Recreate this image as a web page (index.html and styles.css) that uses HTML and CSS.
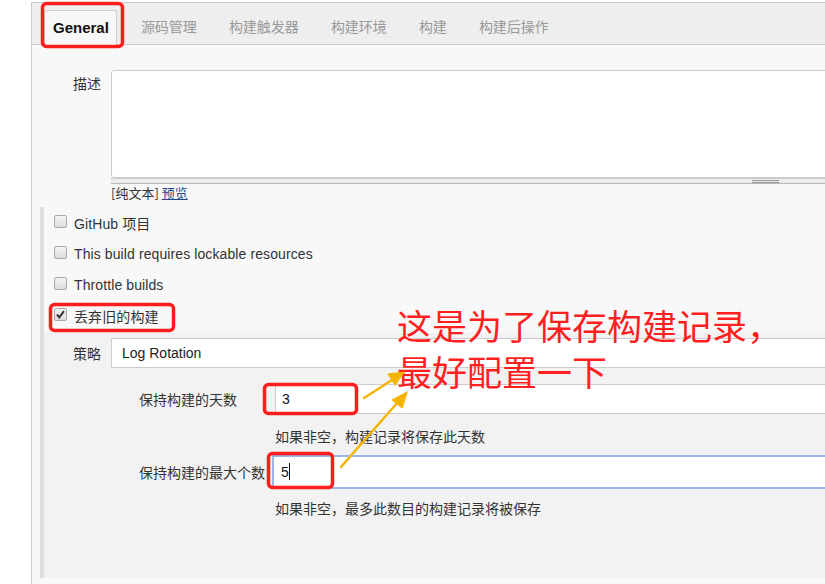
FILE: index.html
```html
<!DOCTYPE html>
<html lang="zh-CN">
<head>
<meta charset="utf-8">
<title>配置</title>
<link rel="stylesheet" href="styles.css">
</head>
<body>
<div class="frame">
  <div class="tabs">
    <div class="tab active">General</div>
    <div class="tab first">源码管理</div>
    <div class="tab">构建触发器</div>
    <div class="tab">构建环境</div>
    <div class="tab">构建</div>
    <div class="tab">构建后操作</div>
  </div>

  <div class="row desc-row">
    <div class="label">描述</div>
    <div class="field">
      <div class="textarea"></div>
      <div class="grip"><span class="grip-lines"></span></div>
      <div class="fmt">[纯文本] <a class="preview">预览</a></div>
    </div>
  </div>

  <div class="opts">
    <div class="opt"><span class="cb"></span><span class="opt-text">GitHub 项目</span></div>
    <div class="opt"><span class="cb"></span><span class="opt-text">This build requires lockable resources</span></div>
    <div class="opt"><span class="cb"></span><span class="opt-text">Throttle builds</span></div>
    <div class="opt"><span class="cb checked"><svg viewBox="0 0 13 13" width="13" height="13"><path d="M3 6.5 L5.3 9.3 L10 3.2" fill="none" stroke="#333" stroke-width="2"/></svg></span><span class="opt-text">丢弃旧的构建</span></div>

    <div class="nested">
      <div class="row strat-row">
        <div class="label">策略</div>
        <div class="field"><div class="select">Log Rotation</div></div>
      </div>
      <div class="sub">
        <div class="sub-label">保持构建的天数</div>
        <div class="sub-field"><div class="input">3</div></div>
        <div class="sub-help">如果非空，构建记录将保存此天数</div>
        <div class="sub-label">保持构建的最大个数</div>
        <div class="sub-field"><div class="input focus">5<span class="caret"></span></div></div>
        <div class="sub-help last">如果非空，最多此数目的构建记录将被保存</div>
      </div>
    </div>
  </div>
</div>

<div class="note">这是为了保存构建记录，<br>最好配置一下</div>
<svg class="marks" width="825" height="584" viewBox="0 0 825 584">
  <g fill="none" stroke="#ff1c1c" stroke-width="3.5">
    <rect x="42.5" y="3.5" width="80" height="43" rx="4"/>
    <rect x="50.5" y="304.5" width="123" height="26" rx="4"/>
    <rect x="264.5" y="384.5" width="92" height="29" rx="4"/>
    <rect x="268.5" y="453.5" width="64" height="34" rx="4"/>
  </g>
  <g stroke="#f5b400" stroke-width="2.5" fill="#f5b400" stroke-linecap="round">
    <line x1="364" y1="398" x2="392" y2="380"/>
    <polygon points="404,372 388,374 395,385" stroke-width="1"/>
    <line x1="341" y1="467" x2="398" y2="402"/>
    <polygon points="407,392 392,400 402,408" stroke-width="1"/>
  </g>
</svg>
</body>
</html>
```

FILE: styles.css
```css
html, body {
  margin: 0;
  padding: 0;
  background: #fff;
  overflow: hidden;
  width: 825px;
  height: 584px;
}
body {
  position: relative;
  font-family: "Liberation Sans", "Noto Sans CJK SC", sans-serif;
  font-size: 14px;
  color: #333;
}
.frame {
  margin: 2px 0 0 31px;
  border-left: 1px solid #ccc;
  border-top: 1px solid #ccc;
  background: #f8f8f8;
  height: 600px;
}
.tabs {
  display: flex;
  align-items: flex-end;
  height: 41px;
  background: #eee;
  border-bottom: 1px solid #ccc;
  padding-left: 12px;
}
.tab {
  height: 34px;
  line-height: 33px;
  padding: 0 16px;
  color: #999;
  font-family: "Noto Sans CJK SC", sans-serif;
  font-size: 14px;
  box-sizing: border-box;
}
.tab.first { margin-left: 8px; }
.tab.active {
  padding: 0 7px 0 8px;
  font-family: "Liberation Sans", sans-serif;
  font-weight: bold;
  font-size: 15px;
  color: #111;
  background: #f8f8f8;
  border: 1px solid #ccc;
  border-bottom: none;
  border-radius: 3px 3px 0 0;
  height: 35px;
  margin-bottom: -1px;
  line-height: 33px;
}
.row {
  display: grid;
  grid-template-columns: 69px 1fr;
  column-gap: 10px;
}
.label {
  text-align: right;
  font-family: "Noto Sans CJK SC", sans-serif;
  color: #333;
}
.desc-row { margin-top: 25px; }
.desc-row .label { padding-top: 4px; line-height: 18px; }
.field { margin-right: -6px; }
.textarea {
  height: 106px;
  background: #fff;
  border: 1px solid #ccc;
  border-radius: 3px;
}
.grip {
  height: 4px;
  background: #ececec;
  border-top: 1px solid #ccc;
  border-bottom: 1px solid #b8b8b8;
  position: relative;
}
.grip-lines {
  position: absolute;
  left: 641px;
  top: 1px;
  width: 27px;
  height: 1px;
  border-top: 1px solid #999;
  border-bottom: 1px solid #999;
}
.fmt {
  font-family: "Noto Sans CJK SC", sans-serif;
  font-size: 13px;
  line-height: 18px;
  margin-top: 0;
  color: #333;
}
.preview { color: #204a87; text-decoration: underline; }
.opts {
  margin-left: 8px;
  margin-top: 5px;
  border-left: 4px solid #dedede;
  padding-top: 0;
}
.opt {
  display: flex;
  align-items: center;
  height: 31px;
  padding-left: 10px;
}
.cb {
  width: 11px;
  height: 11px;
  border: 1px solid #a9a9a9;
  border-radius: 2px;
  background: linear-gradient(#f4f4f4, #dcdcdc);
  margin-right: 7px;
  position: relative;
  top: -1px;
}
.cb svg { position: absolute; left: -1px; top: -1px; }
.opt-text {
  font-family: "Liberation Sans", "Noto Sans CJK SC", sans-serif;
  letter-spacing: 0.1px;
  color: #333;
}
.nested {
  background: #f2f2f2;
  margin-top: 2px;
  height: 245px;
  padding-top: 5px;
  box-sizing: border-box;
}
.nested .row { grid-template-columns: 57px 1fr; }
.strat-row .label { line-height: 30px; }
.select {
  height: 28px;
  line-height: 28px;
  background: #fff;
  border: 1px solid #ccc;
  padding-left: 10px;
  font-family: "Liberation Sans", sans-serif;
  color: #222;
}
.sub {
  display: grid;
  grid-template-columns: 231px 1fr;
  margin-top: 16px;
  align-items: center;
}
.sub-label {
  padding-left: 95px;
  font-family: "Noto Sans CJK SC", sans-serif;
  white-space: nowrap;
}
.sub-field { margin-right: -6px; }
.input {
  height: 28px;
  line-height: 28px;
  background: #fff;
  border: 1px solid #ccc;
  padding-left: 6px;
  font-family: "Liberation Sans", sans-serif;
  color: #111;
}
.input.focus {
  border: 2px solid #9ab7ea;
  margin-left: -3px;
  height: 30px;
  line-height: 30px;
  padding-left: 7px;
}
.caret {
  display: inline-block;
  width: 1px;
  height: 17px;
  background: #111;
  vertical-align: -3px;
}
.sub-help {
  grid-column: 2;
  font-family: "Noto Sans CJK SC", sans-serif;
  line-height: 20px;
  margin: 12px 0 9px;
}
.sub-help.last { margin-top: 9px; }
.note {
  position: absolute;
  left: 397px;
  top: 302px;
  font-family: "Noto Sans CJK SC", sans-serif;
  font-size: 35px;
  line-height: 46px;
  color: #ff1f1f;
  white-space: nowrap;
}
.marks { position: absolute; left: 0; top: 0; }
```
